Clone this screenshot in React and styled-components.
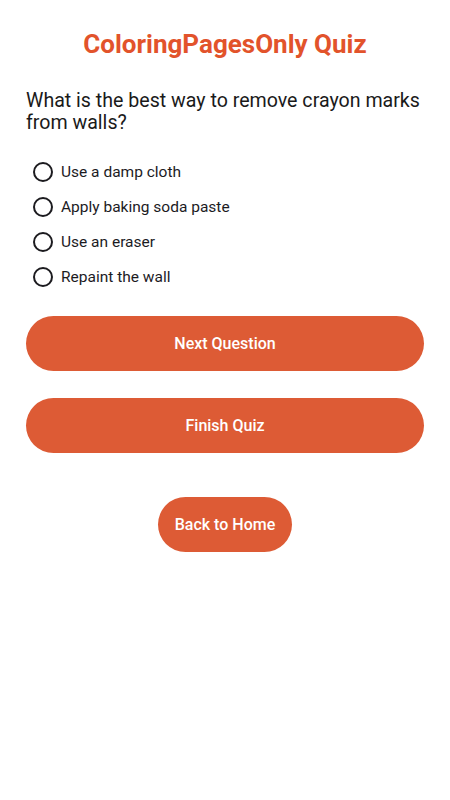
import React, { useState } from 'react';
import styled, { createGlobalStyle } from 'styled-components';

const GlobalStyle = createGlobalStyle`
  html, body {
    margin: 0;
    padding: 0;
    background: #ffffff;
    font-family: Roboto, "Noto Sans", Arial, sans-serif;
  }
`;

const Screen = styled.div`
  width: 450px;
  min-height: 800px;
  box-sizing: border-box;
  padding: 28px 26px 0;
  display: flex;
  flex-direction: column;
`;

const Title = styled.h1`
  margin: 0;
  text-align: center;
  font-size: 26px;
  line-height: 32px;
  font-weight: 700;
  color: #e2532b;
`;

const Question = styled.p`
  margin: 30px 0 0;
  font-size: 19.6px;
  line-height: 22px;
  color: #1a1a1a;
`;

const Options = styled.div`
  margin-top: 20px;
  display: flex;
  flex-direction: column;
`;

const Option = styled.label`
  height: 35px;
  display: flex;
  align-items: center;
  gap: 8px;
  padding-left: 7px;
  font-size: 15.5px;
  color: #1c1b1f;
  cursor: pointer;
`;

const Radio = styled.span`
  width: 16px;
  height: 16px;
  border-radius: 50%;
  border: 2px solid #1c1b1f;
  display: flex;
  align-items: center;
  justify-content: center;

  &::after {
    content: '';
    width: 10px;
    height: 10px;
    border-radius: 50%;
    background: ${p => (p.$checked ? '#1c1b1f' : 'transparent')};
  }
`;

const Button = styled.button`
  align-self: ${p => (p.$compact ? 'center' : 'stretch')};
  margin-top: ${p => p.$gap}px;
  height: 55px;
  padding: 0 17px;
  border: none;
  border-radius: 28px;
  background: #dd5b35;
  color: #ffffff;
  font-family: Roboto, "Noto Sans", Arial, sans-serif;
  font-size: 16px;
  font-weight: 500;
  cursor: pointer;
`;

const answers = [
  'Use a damp cloth',
  'Apply baking soda paste',
  'Use an eraser',
  'Repaint the wall',
];

export default function App() {
  const [picked, setPicked] = useState(null);

  return (
    <>
      <GlobalStyle />
      <Screen>
        <Title>ColoringPagesOnly Quiz</Title>
        <Question>What is the best way to remove crayon marks from walls?</Question>
        <Options>
          {answers.map((a, i) => (
            <Option key={a} onClick={() => setPicked(i)}>
              <Radio $checked={picked === i} />
              {a}
            </Option>
          ))}
        </Options>
        <Button $gap={22}>Next Question</Button>
        <Button $gap={27}>Finish Quiz</Button>
        <Button $gap={44} $compact>Back to Home</Button>
      </Screen>
    </>
  );
}
